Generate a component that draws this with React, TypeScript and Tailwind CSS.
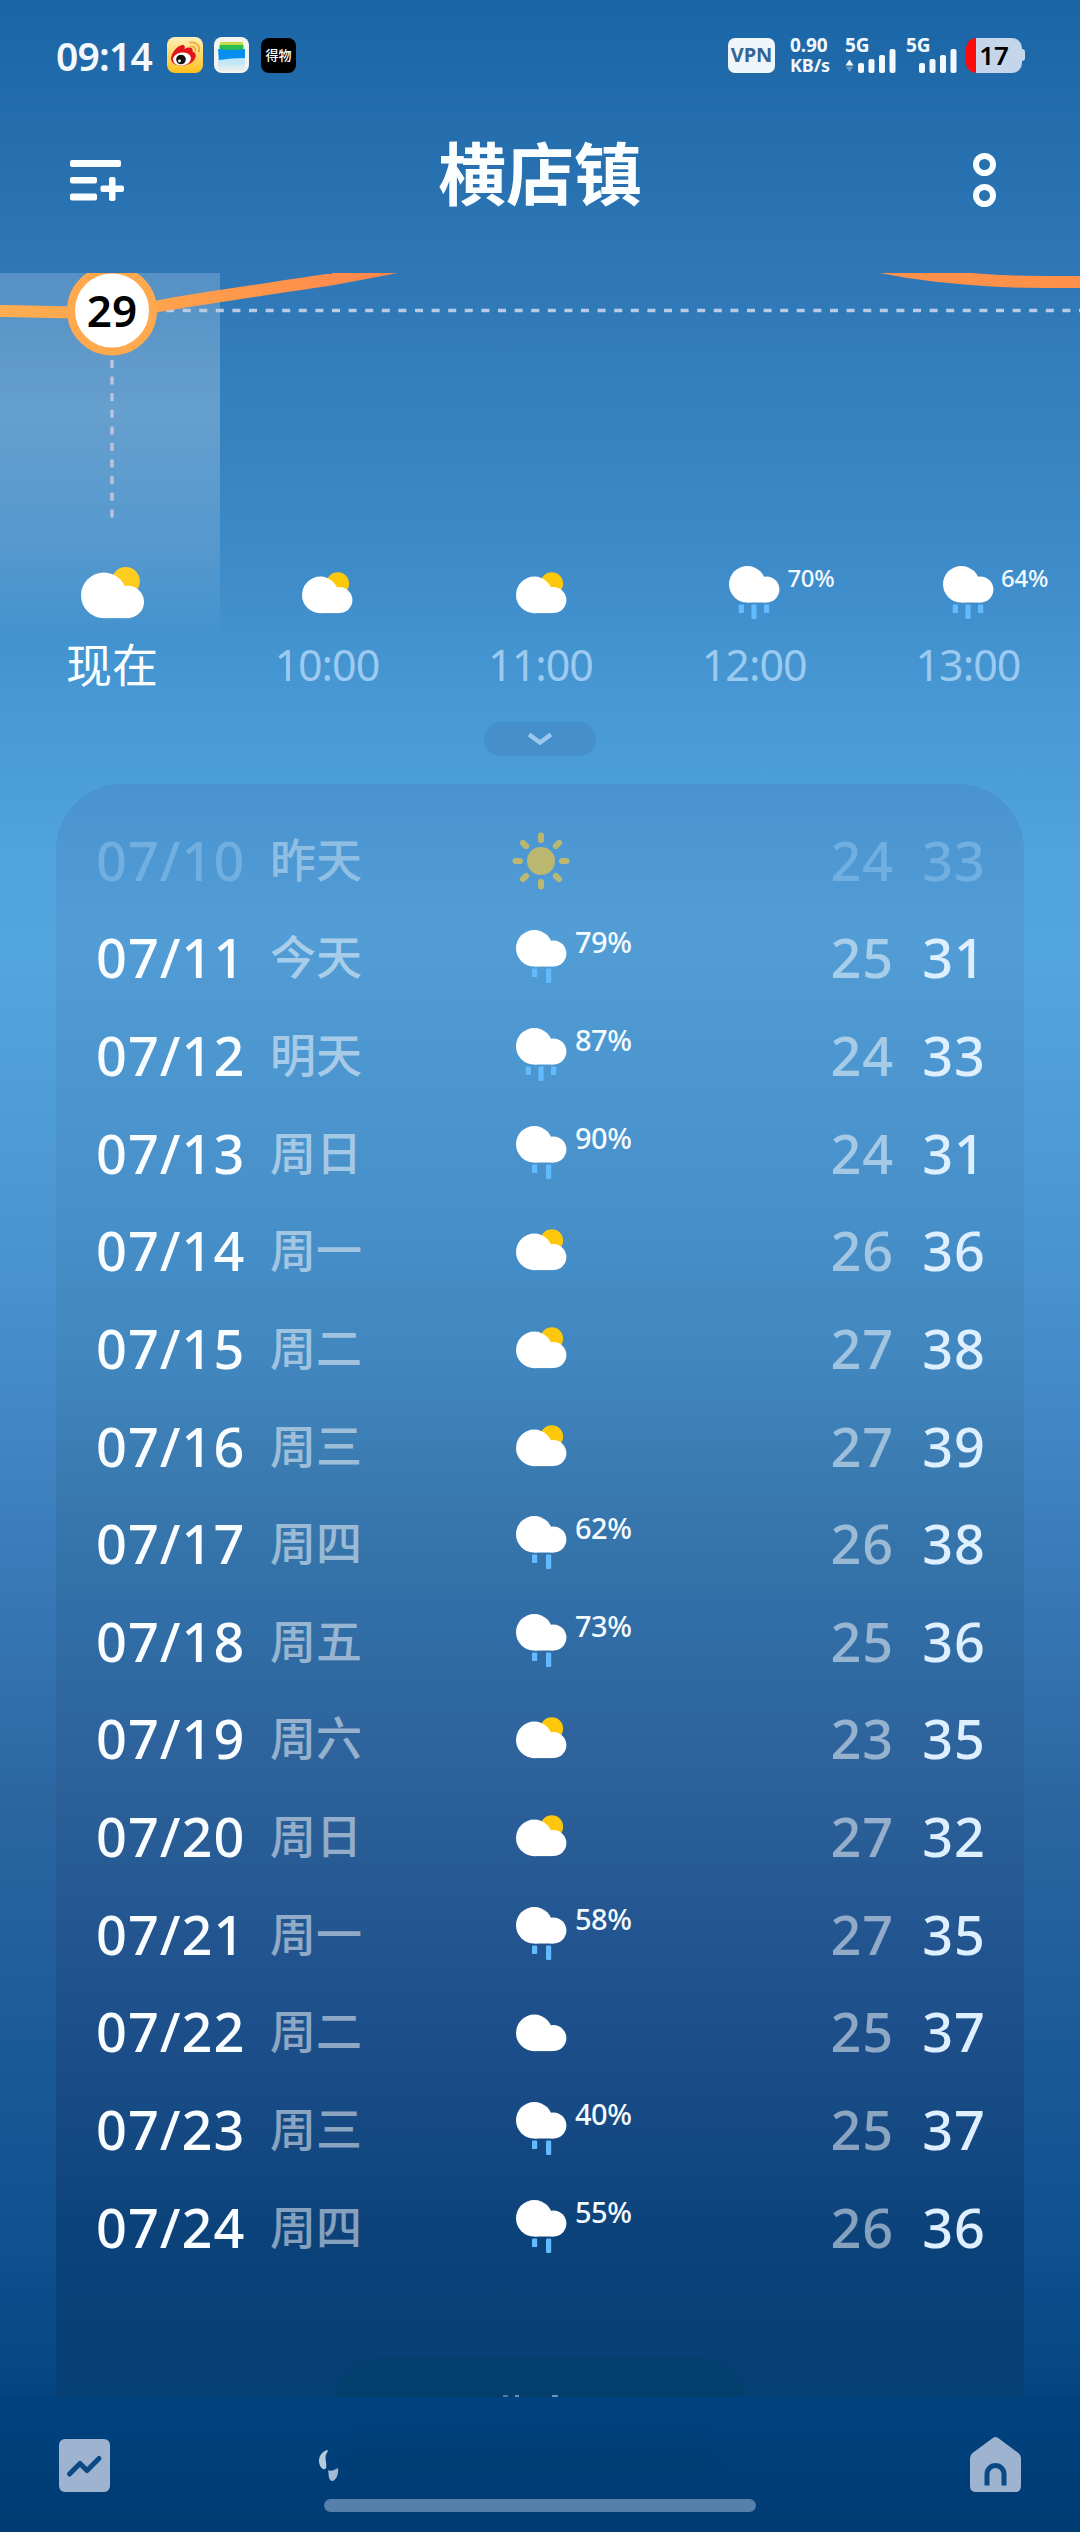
type Kind = 'sun' | 'partly' | 'cloud' | 'rain2' | 'rain3'

function Weather({ kind, size = 66 }: { kind: Kind; size?: number }) {
  if (kind === 'sun') {
    return (
      <svg width={size} height={size} viewBox="0 0 66 66" className="opacity-65">
        <circle cx="33" cy="33" r="14" fill="#f6c93c" />
        {[0, 45, 90, 135, 180, 225, 270, 315].map((a) => (
          <rect key={a} x="30" y="4.5" width="6" height="10.5" rx="3" fill="#f6c93c" transform={`rotate(${a} 33 33)`} />
        ))}
      </svg>
    )
  }
  const rain = kind === 'rain2' || kind === 'rain3'
  return (
    <svg width={size} height={size} viewBox="0 0 66 66">
      {kind === 'partly' && <circle cx="43.8" cy="22.5" r="11.3" fill="#fdc80c" />}
      <g transform={rain ? 'translate(8 5)' : 'translate(8 15.6)'} fill="#fff">
        <circle cx="18.3" cy="18.3" r="18.3" />
        <circle cx="37.4" cy="23.5" r="13" />
        <rect x="18.3" y="18" width="19.1" height="18.5" />
      </g>
      {kind === 'rain3' && (
        <g fill="#62bbff">
          <rect x="17.7" y="43.5" width="5.2" height="8.6" rx="1.2" />
          <rect x="30.4" y="43.5" width="5.2" height="14.4" rx="1.2" />
          <rect x="43" y="43.5" width="5.2" height="8.6" rx="1.2" />
        </g>
      )}
      {kind === 'rain2' && (
        <g fill="#62bbff">
          <rect x="24" y="43.5" width="5.2" height="8.6" rx="1.2" />
          <rect x="38" y="43.5" width="5.2" height="14.4" rx="1.2" />
        </g>
      )}
    </svg>
  )
}

const days: [string, string, Kind, string, number, number][] = [
  ['07/10', '昨天', 'sun', '', 24, 33],
  ['07/11', '今天', 'rain2', '79%', 25, 31],
  ['07/12', '明天', 'rain3', '87%', 24, 33],
  ['07/13', '周日', 'rain2', '90%', 24, 31],
  ['07/14', '周一', 'partly', '', 26, 36],
  ['07/15', '周二', 'partly', '', 27, 38],
  ['07/16', '周三', 'partly', '', 27, 39],
  ['07/17', '周四', 'rain2', '62%', 26, 38],
  ['07/18', '周五', 'rain2', '73%', 25, 36],
  ['07/19', '周六', 'partly', '', 23, 35],
  ['07/20', '周日', 'partly', '', 27, 32],
  ['07/21', '周一', 'rain2', '58%', 27, 35],
  ['07/22', '周二', 'cloud', '', 25, 37],
  ['07/23', '周三', 'rain2', '40%', 25, 37],
  ['07/24', '周四', 'rain2', '55%', 26, 36],
]

const hours: [string, Kind, string][] = [
  ['10:00', 'partly', ''],
  ['11:00', 'partly', ''],
  ['12:00', 'rain3', '70%'],
  ['13:00', 'rain3', '64%'],
]

function Signal({ arrows }: { arrows?: boolean }) {
  return (
    <div className="relative h-[36px] w-[52px]">
      <span className="absolute left-0 top-0 text-[19px] font-bold leading-[16px]">5G</span>
      <svg className="absolute inset-0" width="52" height="36" viewBox="0 0 52 36" fill="#f3f8fd">
        {arrows && <path d="M0.5 28.5L4.5 22.5L8.5 28.5Z" />}
        {arrows && <path d="M1 29.8H8L4.5 35Z" opacity="0.35" />}
        <rect x="13" y="26" width="6" height="10" rx="2" />
        <rect x="23.5" y="22" width="6" height="14" rx="2" />
        <rect x="34" y="18" width="6" height="18" rx="2" />
        <rect x="44.5" y="12" width="6" height="24" rx="2" />
      </svg>
    </div>
  )
}

function StatusBar() {
  return (
    <div className="flex h-[110px] items-center pl-[56px] pr-[54px] text-[#f3f8fd]">
      <span className="w-[97px] whitespace-nowrap text-[39px] font-semibold leading-none tracking-[-0.8px]">09:14</span>
      <svg className="ml-[14px]" width="36" height="36" viewBox="0 0 36 36">
        <defs>
          <linearGradient id="weibo" x1="0" y1="0" x2="0" y2="1">
            <stop offset="0" stopColor="#fff0b8" />
            <stop offset="1" stopColor="#ffc01c" />
          </linearGradient>
        </defs>
        <rect width="36" height="36" rx="8" fill="url(#weibo)" />
        <path d="M4 22C4 16 10 9 15 8c3-.4 3 2 2.6 4 4-2.4 9-2 8 2.5 4 1.5 4 5 1.5 8.5C23 30 5 31 4 22Z" fill="#e0161b" />
        <ellipse cx="15" cy="22" rx="9" ry="6.5" fill="#fff" transform="rotate(-8 15 22)" />
        <circle cx="14" cy="22.5" r="4.8" fill="#111" />
        <circle cx="12.5" cy="24" r="1.4" fill="#fff" />
        <path d="M23 5.5c6-1 10 3 9 9M24 9.5c3-.5 5 1.5 4.5 4" fill="none" stroke="#f0ae3e" strokeWidth="2" strokeLinecap="round" />
      </svg>
      <svg className="ml-[11px]" width="35" height="36" viewBox="0 0 35 36">
        <defs>
          <linearGradient id="wallet" x1="0" y1="0" x2="0" y2="1">
            <stop offset="0.6" stopColor="#bfe6fb" />
            <stop offset="1" stopColor="#f1f0ea" />
          </linearGradient>
        </defs>
        <rect width="35" height="36" rx="8" fill="#f3f3ef" />
        <path d="M4 12H31V34H4Z" fill="url(#wallet)" />
        <path d="M6 5H29V12H6Z" fill="#c6d94a" />
        <path d="M5.5 8H29.5V16H5.5Z" fill="#28bd50" />
        <path d="M4 12Q18 14 31 12V21Q17 21 5 23Z" fill="#078ff0" />
      </svg>
      <div className="ml-[12px] flex h-[35px] w-[35px] items-center justify-center rounded-[8px] bg-black">
        <span className="text-[13px] font-medium leading-none text-white">得物</span>
      </div>
      <div className="ml-auto flex items-center">
        <div className="flex h-[35px] w-[47px] items-center justify-center rounded-[7px] bg-[#eff5fb] text-[20px] font-bold leading-none text-[#336496]">VPN</div>
        <div className="ml-[15px] w-[41px] whitespace-nowrap text-[19px] font-bold leading-[20px] tracking-[-0.1px]">
          <div>0.90</div>
          <div className="text-[18px]">KB/s</div>
        </div>
        <div className="ml-[14px]"><Signal arrows /></div>
        <div className="ml-[9px]"><Signal /></div>
        <div className="ml-[8px] flex h-[35px] w-[60px] items-center">
          <div className="flex h-[35px] w-[56px] items-center justify-center overflow-hidden rounded-[10px] bg-[linear-gradient(90deg,#ff0a0a_10px,#c5d5ea_10px)] text-[26px] font-semibold leading-none text-black">17</div>
          <div className="h-[12px] w-[3px] rounded-r-[3px] bg-[#c5d5ea]" />
        </div>
      </div>
    </div>
  )
}

function Header() {
  return (
    <div className="flex h-[163px] items-start justify-between pl-[70px] pr-[84px]">
      <svg className="mt-[50px]" width="56" height="42" viewBox="0 0 56 42" fill="#fbfeff">
        <rect width="51" height="7" rx="2" />
        <rect y="17" width="27" height="6.5" rx="2" />
        <rect y="33.5" width="27" height="7" rx="2" />
        <rect x="30.5" y="25.5" width="23.5" height="6.5" rx="2" />
        <rect x="39" y="17" width="6.5" height="24" rx="2" />
      </svg>
      <h1 className="mr-[19px] mt-[14px] text-[68px] font-bold leading-[100px] text-[#fbfeff]">横店镇</h1>
      <svg className="mt-[43px]" width="23" height="55" viewBox="0 0 23 55" fill="none" stroke="#fbfeff" strokeWidth="6">
        <circle cx="11.5" cy="11.5" r="8.5" />
        <circle cx="11.5" cy="42.5" r="8.5" />
      </svg>
    </div>
  )
}

function Hourly() {
  return (
    <section className="relative h-[511px] overflow-hidden">
      <div className="absolute left-0 top-0 h-[365px] w-[220px] bg-[linear-gradient(180deg,rgba(255,255,255,0.19)_0%,rgba(255,255,255,0.24)_38%,rgba(255,255,255,0.13)_75%,rgba(255,255,255,0)_100%)]" />
      <svg className="absolute left-0 top-0" width="1080" height="260" viewBox="0 0 1080 260" fill="none">
        <defs>
          <linearGradient id="curve" gradientUnits="userSpaceOnUse" x1="0" y1="0" x2="400" y2="0">
            <stop offset="0" stopColor="#ffad50" />
            <stop offset="0.4" stopColor="#ffa24c" />
            <stop offset="1" stopColor="#ff854b" />
          </linearGradient>
        </defs>
        <path d="M166 37.5H1080" stroke="#b8cbe3" strokeWidth="3.4" strokeDasharray="8 8.6" />
        <path d="M112 87V245" stroke="#bdc3da" strokeWidth="3.4" strokeDasharray="8 8.6" />
        <path d="M-10 38C60 38 110 44 170 31C225 22 275 15 333 6C355 2 375 -2 397 -6L450 -15" stroke="url(#curve)" strokeWidth="12" />
        <path d="M840 -15L880 -6C920 2 950 5 1000 8C1030 9.5 1060 9 1090 9" stroke="#ff914a" strokeWidth="12" />
        <circle cx="112" cy="37.5" r="41" fill="#fff" stroke="#ffa94e" strokeWidth="8" />
      </svg>
      <div className="absolute left-[62px] top-[11px] w-[100px] text-center text-[44px] font-semibold leading-[52px] text-black">29</div>
      <div className="flex pt-[283px]">
        <div className="flex w-[220px] flex-col items-center pl-[4px]">
          <div className="flex h-[76px] items-center"><Weather kind="partly" size={82.5} /></div>
          <div className="mt-[2px] text-[46px] leading-[60px] text-[#fbfeff]">现在</div>
        </div>
        <div className="flex flex-1">
          {hours.map(([time, kind, chance]) => (
            <div key={time} className="relative flex w-[213.7px] shrink-0 flex-col items-center">
              <div className="flex h-[76px] items-center"><Weather kind={kind} /></div>
              {chance && <span className="absolute left-[140px] top-[4px] text-[24px] font-medium leading-[36px] tracking-[-0.3px] text-[#f2faff]">{chance}</span>}
              <div className="mt-[3px] text-[43px] leading-[60px] tracking-[-1px] text-[#9ccaf0]">{time}</div>
            </div>
          ))}
        </div>
      </div>
      <div className="mx-auto mt-[27px] flex h-[34px] w-[112px] items-center justify-center rounded-full bg-[#4590ca]">
        <svg width="24" height="14" viewBox="0 0 24 14" fill="none" stroke="#9dc7ee" strokeWidth="4.5">
          <path d="M1 2.5L12 10.5L23 2.5" />
        </svg>
      </div>
    </section>
  )
}

function Daily() {
  return (
    <section className="relative mx-[56px] h-[1613px] overflow-hidden rounded-t-[66px] bg-[linear-gradient(180deg,#4994d0_0px,#529dd6_150px,#4b94cd_330px,#468fc8_440px,#4186bf_580px,#397aaf_700px,#316ea7_830px,#2d629b_980px,#235690_1150px,#194c86_1300px,#0c427a_1450px,#063f73_1613px)] pt-[28px]">
      {days.map(([date, label, kind, chance, low, high], i) => (
        <div key={date} className="flex h-[97.64px] items-center pl-[40px] pr-[38px] text-[54px] font-medium leading-none tracking-[1px]">
          <span className={i === 0 ? 'w-[174px] pb-[2px] text-[#70afe0]' : 'w-[174px] pb-[2px] text-[#fafdff]'}>{date}</span>
          <span className={i === 0 ? 'w-[238px] pb-[4px] text-[46px] tracking-[0px] text-white/40' : 'w-[238px] pb-[4px] text-[46px] tracking-[0px] text-white/50'}>{label}</span>
          <span className="flex w-[230px]">
            <Weather kind={kind} />
            {chance && <span className="ml-[1px] text-[29px] leading-[34px] tracking-[-0.5px] text-[#f4fbff]">{chance}</span>}
          </span>
          <span className={i === 0 ? 'ml-auto pb-[2px] text-[#70afe0]' : 'ml-auto pb-[2px] text-white/50'}>{low}</span>
          <span className={i === 0 ? 'ml-[28px] pb-[2px] text-[#70afe0]' : 'ml-[28px] pb-[2px] text-[#deefff]'}>{high}</span>
        </div>
      ))}
      <div className="absolute bottom-[-60px] left-[277px] h-[100px] w-[414px] rounded-full bg-[#043f6e]" />
      <div className="absolute bottom-0 left-[447px] flex h-[2px] gap-[7px]">
        <i className="w-[5px] bg-[#4f789f]" />
        <i className="w-[4px] bg-[#7093b5]" />
        <i className="ml-[26px] w-[6px] bg-[#7093b5]" />
      </div>
    </section>
  )
}

function BottomBar() {
  return (
    <div className="relative flex h-[135px] items-start justify-between bg-[linear-gradient(180deg,#00427f,#003b73)] pl-[59px] pr-[59px]">
      <svg className="mt-[42px]" width="51" height="53" viewBox="0 0 51 53">
        <rect width="51" height="53" rx="6" fill="#9db3d0" />
        <path d="M10.5 35L21 24.5L28 31.5L40 19.5" fill="none" stroke="#0b4985" strokeWidth="5" strokeLinecap="round" strokeLinejoin="round" />
      </svg>
      <svg className="absolute left-[318px] top-[53px]" width="24" height="34" viewBox="0 0 24 34">
        <path d="M10 0C-1 2 -1 16 5 19C10 21 8 13 7.5 8C7.5 4 10 2 10 0Z" fill="#b5cbdc" />
        <path d="M10 20C13 22 16 20 20 18C21 24 18 31 14 31C10 30 11 24 10 20Z" fill="#a3bbd4" />
      </svg>
      <div className="absolute left-[345px] top-[47px] h-[37px] w-[370px] rounded-full bg-[#003e76] blur-[6px]" />
      <svg className="mt-[40px]" width="51" height="55" viewBox="0 0 51 55">
        <path d="M22.5 1.2Q25.5-1 28.5 1.2L48.5 16Q51 18 51 21V49Q51 55 45 55H6Q0 55 0 49V21Q0 18 2.5 16Z" fill="#9db3d0" />
        <path d="M17 48.5V37a8.5 8.5 0 0 1 17 0V48.5" fill="none" stroke="#0b4985" strokeWidth="5" />
      </svg>
      <div className="absolute bottom-[20px] left-[324px] h-[13px] w-[432px] rounded-full bg-[#577fac]" />
    </div>
  )
}

export default function App() {
  return (
    <main className="h-[2532px] w-[1080px] overflow-hidden bg-[linear-gradient(180deg,#1a65a5_0px,#246eae_130px,#2f77b7_270px,#3581be_410px,#3d8bc8_560px,#4798d4_700px,#50a3dd_850px,#53a5df_960px,#4f9dd8_1100px,#4792cf_1280px,#4084c4_1450px,#3777b6_1600px,#2b66a1_1800px,#1e5c9a_2000px,#0e5090_2250px,#044581_2397px,#003b73_2532px)] font-['Noto_Sans','Noto_Sans_CJK_SC',sans-serif]">
      <StatusBar />
      <Header />
      <Hourly />
      <Daily />
      <BottomBar />
    </main>
  )
}
